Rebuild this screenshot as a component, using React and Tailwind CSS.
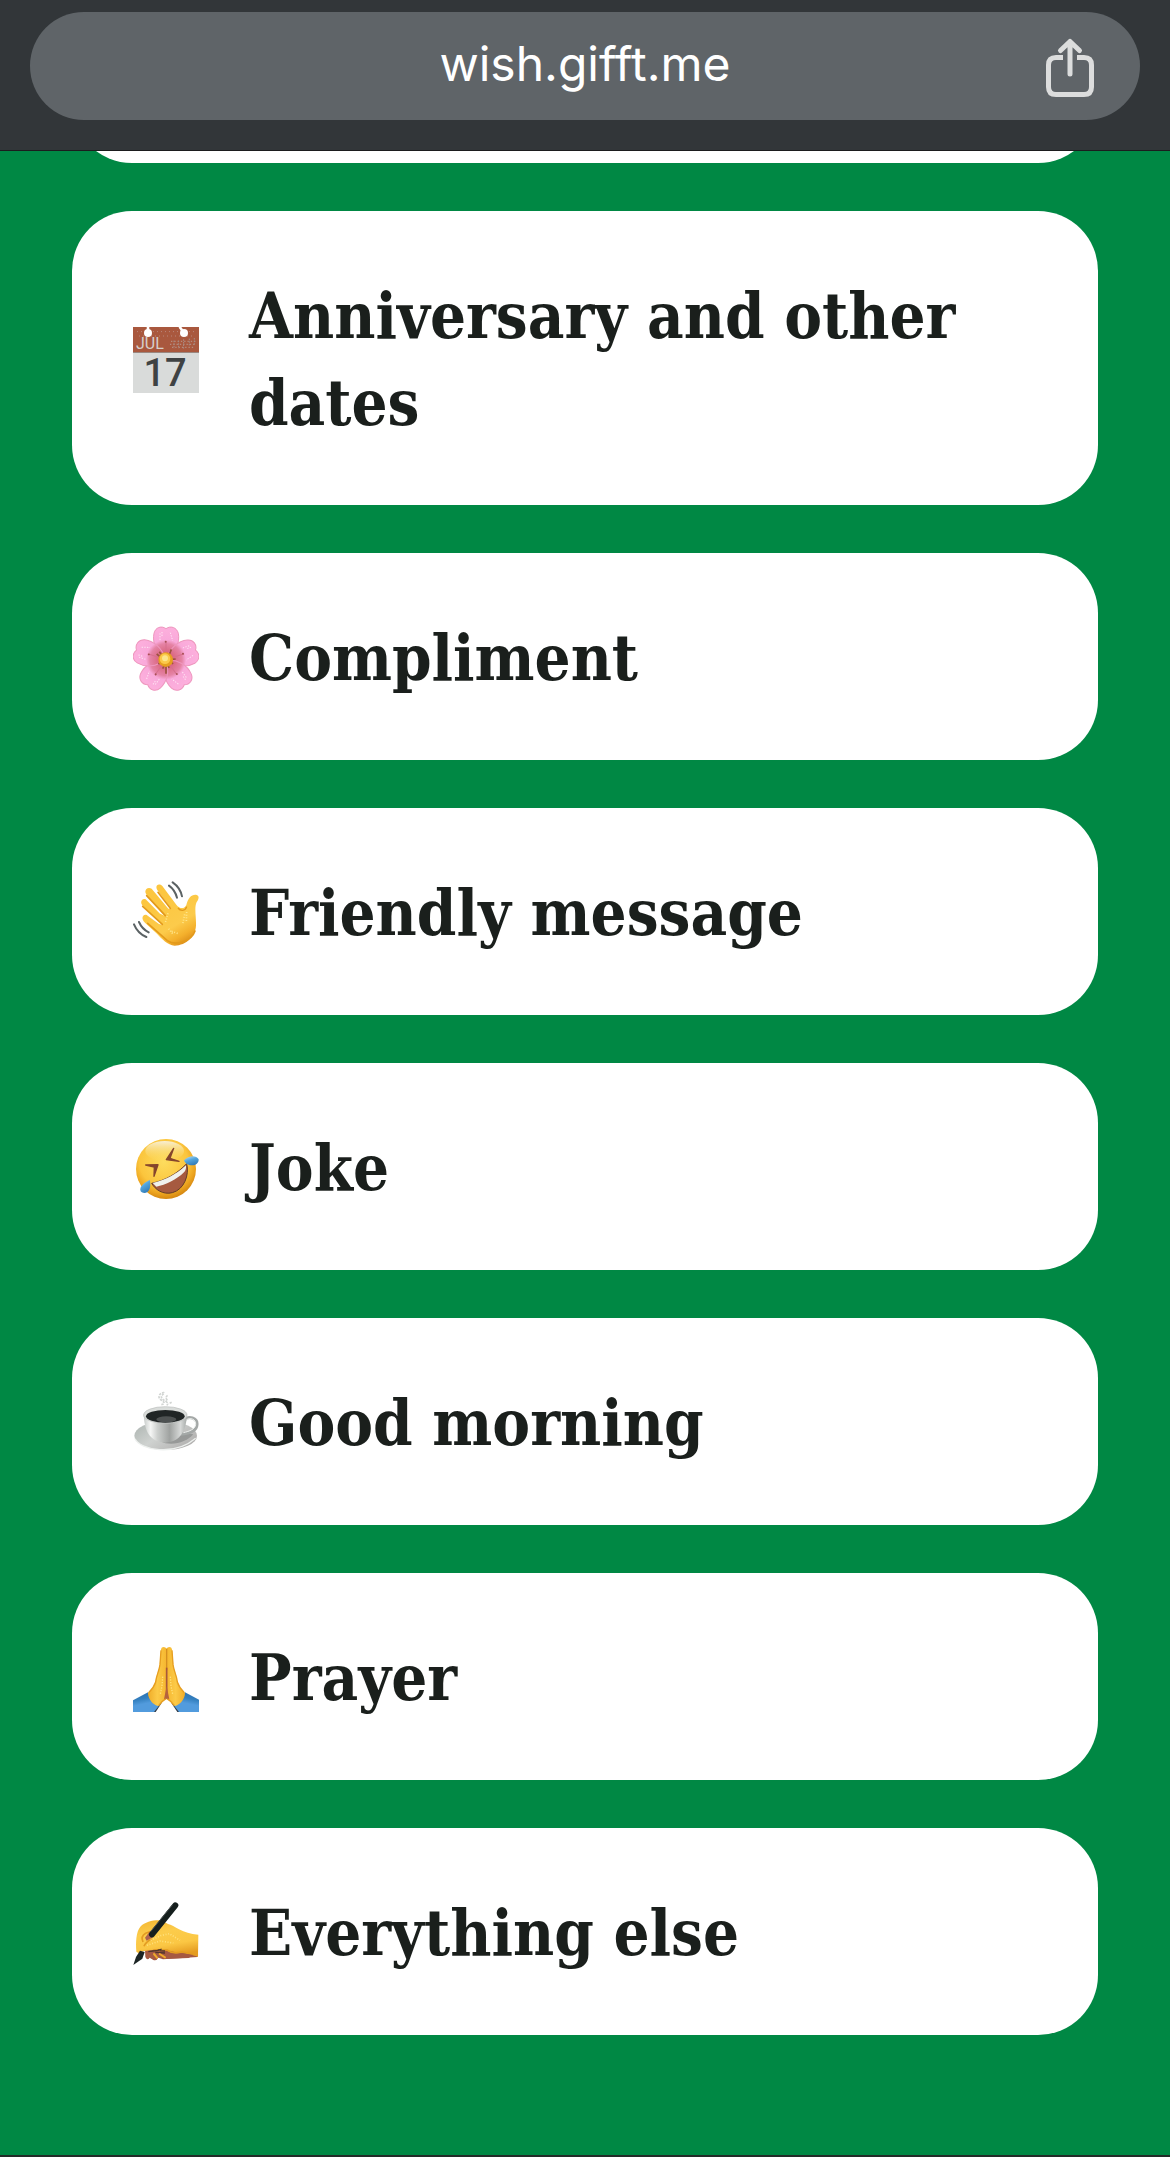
import React from 'react';

const CalendarIcon = () => (
    <svg viewBox="0 0 66 66" className="w-full h-full overflow-visible" aria-hidden="true">
        <rect width="66" height="66" fill="#d9dbda" />
        <rect width="66" height="25.600" fill="#a9583e" />
        <path d="M0 25.500H66" stroke="#8b8582" strokeWidth="0.700" />
        <path d="M4 4.600H63M6 9H62" stroke="#b9867a" strokeDasharray="1 3" />
        <path d="M38 14.300H63M37 17.300H63M39 20.300H62" stroke="#b99a90" strokeDasharray="1.300 2" />
        <path d="M41 13.600V21.600M45.600 13.600V21.600M50.600 12.300V21.600M56.300 11.600V19M61.300 11V18.300" stroke="#a58c85" strokeDasharray="1.600 1" />
        <circle cx="15" cy="6" r="4" fill="#fff" />
        <circle cx="51" cy="6" r="4" fill="#fff" />
        <path d="M15 0V6M46.600 -0.300L50.300 5" stroke="#fff" strokeWidth="2.600" />
        <text x="3" y="22" fontSize="16" fontFamily="Roboto, sans-serif" fill="#d6cfcb">JUL</text>
        <text x="32" y="59" textAnchor="middle" fontSize="38" fontFamily="Roboto, sans-serif" fontWeight="500" fill="#3f4243">17</text>
    </svg>
);

const petalPath = 'M168 158C138 142 126 108 132 82C136 64 154 58 168 68C182 58 200 64 205 82C210 108 198 142 168 158Z';

const FlowerIcon = () => (
    <svg viewBox="69 60 198 198" className="w-full h-full" aria-hidden="true">
        <defs>
            <radialGradient id="petal" gradientUnits="userSpaceOnUse" cx="168" cy="160" r="98">
                <stop offset="0.200" stopColor="#d9667f" />
                <stop offset="0.480" stopColor="#e583a5" />
                <stop offset="0.600" stopColor="#f9a9da" />
                <stop offset="1" stopColor="#fdb0dd" />
            </radialGradient>
        </defs>
        {[0, 72, 144, 216, 288].map((angle) => (
            <g key={angle} transform={`rotate(${angle} 168 161)`}>
                <path d={petalPath} fill="url(#petal)" stroke="#ee97be" strokeWidth="3" />
                <path d="M150 82V106M156 78V94M181 80L188 104" stroke="#ffe4f3" strokeWidth="3" strokeDasharray="4 4" fill="none" />
                <path d="M168 138V106" stroke="#d66f8d" strokeWidth="3" />
                <circle cx="167" cy="107" r="3" fill="#a94f55" />
            </g>
        ))}
        <path d="M140 144L149 151M184 130L178 145M145 174L153 169M168 203V180M189 174L184 168M148 137L155 147M197 159L185 160M158 188L163 178M177 186L174 178" stroke="#9c523f" strokeWidth="5" />
        <circle cx="167" cy="161" r="22" fill="#e69f21" />
        <circle cx="165" cy="158" r="16" fill="#fbc94a" />
        <circle cx="165" cy="157" r="9" fill="#fce58b" />
    </svg>
);

const WaveIcon = () => (
    <svg viewBox="69 60 198 198" className="w-full h-full" aria-hidden="true">
        <defs>
            <linearGradient id="wave" x1="0.300" y1="0.200" x2="0.750" y2="1">
                <stop offset="0" stopColor="#fcc63f" />
                <stop offset="0.600" stopColor="#fccb4b" />
                <stop offset="0.820" stopColor="#f4b02c" />
                <stop offset="1" stopColor="#d98a18" />
            </linearGradient>
        </defs>
        <path
            d="M159 192L105 185C92 174 97 159 110 162L147 189L159 192L100 136C88 126 94 111 107 115L150 158L164 164L111 103C99 90 111 75 125 83L175 143L183 142L144 90C132 75 145 64 157 75L199 131C209 145 224 144 229 132C234 112 243 100 258 101C269 103 267 114 260 123C252 140 259 168 258 193C257 225 229 254 194 254C173 252 155 233 141 218L105 185Z"
            fill="url(#wave)"
        />
        <path d="M98 136L157 190M110 104L166 164M144 94L181 142M113 187L172 239C197 256 245 240 255 210" stroke="#e39a1b" strokeWidth="5" fill="none" strokeLinecap="round" />
        <path d="M230 137C226 151 211 151 204 141" stroke="#e39a1b" strokeWidth="4" fill="none" />
        <path d="M174 157L166 185M176 203L191 222M224 160L218 190M230 153L229 183M185 211L205 218" stroke="#ffe58a" strokeWidth="5" strokeDasharray="3 5" />
        <path d="M188 64Q211 80 216 106M177 74Q195 87 201 110M87 183Q96 204 116 214M72 190Q83 217 109 228" stroke="#5b6264" strokeWidth="6" fill="none" strokeLinecap="round" />
    </svg>
);

const LaughIcon = () => (
    <svg viewBox="69 60 198 198" className="w-full h-full" aria-hidden="true">
        <defs>
            <radialGradient id="face" cx="0.460" cy="0.380" r="0.620">
                <stop offset="0" stopColor="#fddc5e" />
                <stop offset="0.650" stopColor="#fbc53d" />
                <stop offset="0.850" stopColor="#eda51f" />
                <stop offset="1" stopColor="#d58711" />
            </radialGradient>
            <linearGradient id="shine" x1="0" y1="0" x2="0" y2="1">
                <stop offset="0" stopColor="#f8efd5" />
                <stop offset="1" stopColor="#fcdb62" stopOpacity="0" />
            </linearGradient>
            <linearGradient id="tear" x1="0" y1="0" x2="0.500" y2="1">
                <stop offset="0" stopColor="#c4e4f6" />
                <stop offset="0.500" stopColor="#53a5dd" />
                <stop offset="1" stopColor="#347eba" />
            </linearGradient>
        </defs>
        <circle cx="168" cy="159" r="90" fill="url(#face)" />
        <ellipse cx="164" cy="105" rx="58" ry="30" fill="url(#shine)" />
        <path d="M125 202C166 193 201 174 230 143C239 177 222 221 187 230C159 237 136 221 125 202Z" fill="#a65a40" stroke="#633c29" strokeWidth="3" />
        <path d="M128 201C165 193 199 175 228 148C229 158 227 164 222 169C200 191 167 207 139 212Z" fill="#f0f1ed" />
        <path d="M191 97L169 131L207 136L180 127ZM107 147L144 146L132 181L133 153Z" fill="#85452c" stroke="#85452c" strokeWidth="4" strokeLinejoin="round" />
        <path d="M222 133C236 119 258 116 266 130C267 144 252 151 238 147C230 145 224 140 222 133Z" fill="url(#tear)" />
        <path d="M119 191C105 200 86 210 92 226C100 235 115 231 119 218C122 209 121 199 119 191Z" fill="url(#tear)" />
    </svg>
);

const CoffeeIcon = () => (
    <svg viewBox="69 60 198 198" className="w-full h-full" aria-hidden="true">
        <defs>
            <linearGradient id="cup">
                <stop offset="0" stopColor="#c7cbc9" />
                <stop offset="0.160" stopColor="#f5f6f5" />
                <stop offset="0.320" stopColor="#cdd0ce" />
                <stop offset="0.600" stopColor="#9fa2a0" />
                <stop offset="0.850" stopColor="#d7d9d8" />
                <stop offset="1" stopColor="#a6aaa8" />
            </linearGradient>
            <linearGradient id="saucer" x1="0" y1="0" x2="1" y2="0.600">
                <stop offset="0" stopColor="#aab2ae" />
                <stop offset="0.500" stopColor="#cfd2d0" />
                <stop offset="1" stopColor="#b3b2b1" />
            </linearGradient>
        </defs>
        <ellipse cx="167" cy="194" rx="94" ry="43" fill="url(#saucer)" />
        <path d="M75 203C91 238 194 256 257 202" fill="none" stroke="#edf0ee" strokeWidth="4" />
        <path d="M150 211C184 228 230 214 250 190L211 183Z" fill="#979998" />
        <path d="M222 148C236 132 263 141 261 161C260 181 236 188 211 190" fill="none" stroke="#a4a8a7" strokeWidth="9" />
        <path d="M226 148C241 137 259 145 257 161C255 174 239 181 220 185" fill="none" stroke="#edf0ee" strokeWidth="3" />
        <path d="M101 130C103 176 116 213 166 215C214 213 229 174 231 130Z" fill="url(#cup)" />
        <ellipse cx="166" cy="132" rx="65" ry="25" fill="#d9dcda" stroke="#b9bdbb" strokeWidth="2" />
        <ellipse cx="166" cy="136" rx="58" ry="19" fill="#202525" />
        <ellipse cx="169" cy="145" rx="30" ry="9" fill="#4e5252" />
        <path d="M154 101Q170 98 155 88Q140 79 153 67Q169 60 157 72Q148 80 168 91Q179 100 167 104M172 88Q164 79 173 73M179 97L185 94" stroke="#d2d5d3" strokeWidth="5" strokeDasharray="7 3" fill="none" />
    </svg>
);

const PrayIcon = () => (
    <svg viewBox="69 60 198 198" className="w-full h-full" aria-hidden="true">
        <defs>
            <linearGradient id="handLeft">
                <stop offset="0" stopColor="#efac29" />
                <stop offset="0.500" stopColor="#fcca48" />
                <stop offset="1" stopColor="#f5b62f" />
            </linearGradient>
            <linearGradient id="sleeve" x1="0" y1="0" x2="0.300" y2="1">
                <stop offset="0" stopColor="#296cae" />
                <stop offset="0.400" stopColor="#3480bf" />
                <stop offset="0.650" stopColor="#529bdd" />
            </linearGradient>
        </defs>
        {['', 'translate(339 0) scale(-1 1)'].map((flip) => (
            <g key={flip} transform={flip}>
                <path d="M132 238L155 231L137 258H121Z" fill="#333a43" />
                <path d="M114 199L68 223V258H132L151 234Z" fill="url(#sleeve)" />
                <path d="M170 69C166 60 154 61 153 70L149 116C147 134 139 145 136 170C132 185 121 191 114 201C114 218 128 237 145 240C151 230 157 224 170 218Z" fill="url(#handLeft)" />
                <path d="M153 73L150 116C147 137 139 148 137 168Q132 184 116 200M146 239Q154 226 169 217" stroke="#e69e20" strokeWidth="4" fill="none" />
                <path d="M158 152L156 180L151 204" stroke="#ffe17b" strokeWidth="4" strokeDasharray="4 4" fill="none" />
            </g>
        ))}
        <path d="M170 68V133" stroke="#d58f20" strokeWidth="4" />
        <path d="M170 125V218" stroke="#a8593b" strokeWidth="5" />
        <path d="M170 180L162 220L170 216L178 220Z" fill="#b5623e" />
    </svg>
);

const WritingIcon = () => (
    <svg viewBox="69 60 198 198" className="w-full h-full" aria-hidden="true">
        <defs>
            <linearGradient id="writing" x1="0.200" y1="0" x2="0.500" y2="1">
                <stop offset="0" stopColor="#f4b935" />
                <stop offset="0.350" stopColor="#fccc4b" />
                <stop offset="0.700" stopColor="#fbc744" />
                <stop offset="1" stopColor="#e59c20" />
            </linearGradient>
        </defs>
        <path d="M105 205L106 228Q112 240 119 230L130 237Q139 241 145 230L159 235L263 228L259 199Z" fill="#a65942" />
        <path d="M79 212C77 183 78 153 91 137C106 121 133 116 154 118L174 129C193 132 217 159 265 161L264 227C245 218 225 215 201 216C182 209 159 207 144 205L98 211L90 219Z" fill="url(#writing)" />
        <path d="M99 183Q91 166 107 157L128 149M102 196Q106 184 125 173M130 207L171 207Q188 220 216 213L264 224" stroke="#e39c21" strokeWidth="5" fill="none" />
        <path d="M130 210L170 211Q190 224 216 217L250 222L236 231L160 234Z" fill="#a65942" />
        <path d="M105 170L118 153L143 139L128 169L110 179Z" fill="#ae634f" />
        <path d="M126 160L196 73" stroke="#151e1d" strokeWidth="18" strokeLinecap="round" />
        <path d="M122 152L187 72" stroke="#4c5353" strokeWidth="3" />
        <path d="M90 209L104 213L97 233L70 252L78 228Z" fill="#1c2525" />
        <path d="M115 212L145 208L155 204M136 214L165 216M149 209L165 210" stroke="#51372e" strokeWidth="4" />
        <path d="M132 219L141 230M149 219L165 229" stroke="#efaa2c" strokeWidth="6" strokeLinecap="round" />
        <path d="M122 178L152 164L178 158L210 178M111 193L150 180L190 186" stroke="#ffe17c" strokeWidth="5" strokeDasharray="3 5" fill="none" />
    </svg>
);

const ShareIcon = () => (
    <svg viewBox="0 0 50 64" className="w-[50px] h-[64px]" fill="none" stroke="#dcdddd" strokeWidth="5" strokeLinecap="round" strokeLinejoin="round" aria-hidden="true">
        <path d="M18 23.500H11Q3.500 23.500 3.500 31V53Q3.500 60.500 11 60.500H39Q46.500 60.500 46.500 53V31Q46.500 23.500 39 23.500H32" strokeLinecap="butt" />
        <path d="M25 40V7.500M15.500 16.500L25 7.500L34.500 16.500" />
    </svg>
);

const categories = [
    { label: 'Anniversary and other dates', icon: CalendarIcon },
    { label: 'Compliment', icon: FlowerIcon },
    { label: 'Friendly message', icon: WaveIcon },
    { label: 'Joke', icon: LaughIcon },
    { label: 'Good morning', icon: CoffeeIcon },
    { label: 'Prayer', icon: PrayIcon },
    { label: 'Everything else', icon: WritingIcon },
];

const App = () => {
    return (
        <div className="min-h-screen flex flex-col bg-[#008844] border-b-2 border-[#222c28]">
            {/* Address bar */}
            <header className="bg-[#323639] border-b border-[#1b1c1e] px-[30px] pt-3 pb-[30px]">
                <div className="h-[108px] rounded-full bg-[#5f6468] grid grid-cols-[1fr_auto_1fr] items-center px-[45px]">
                    <span className="col-start-2 font-['Inter',sans-serif] text-5xl leading-[60px] text-white pb-1">wish.gifft.me</span>
                    <button type="button" aria-label="Share" className="justify-self-end">
                        <ShareIcon />
                    </button>
                </div>
            </header>

            <main className="px-[72px] pb-[120px]">
                {/* Bottom edge of the card scrolled under the bar */}
                <div className="h-3 overflow-hidden flex items-end" aria-hidden="true">
                    <div className="w-full h-[207px] shrink-0 rounded-[60px] bg-white"></div>
                </div>

                <nav className="mt-12 flex flex-col gap-12">
                    {categories.map(({ label, icon: Icon }) => (
                        <a key={label} href="#" className="bg-white rounded-[60px] pt-[62px] pb-[58px] pl-[61px] pr-[60px] flex items-center gap-[50px]">
                            <span className="w-[66px] h-[66px] shrink-0">
                                <Icon />
                            </span>
                            <span className="font-['DejaVu_Serif_Condensed','DejaVu_Serif',serif] font-bold text-[63px] leading-[87px] text-[#1a1f1c]">
                                {label}
                            </span>
                        </a>
                    ))}
                </nav>
            </main>
        </div>
    );
};

export default App;
